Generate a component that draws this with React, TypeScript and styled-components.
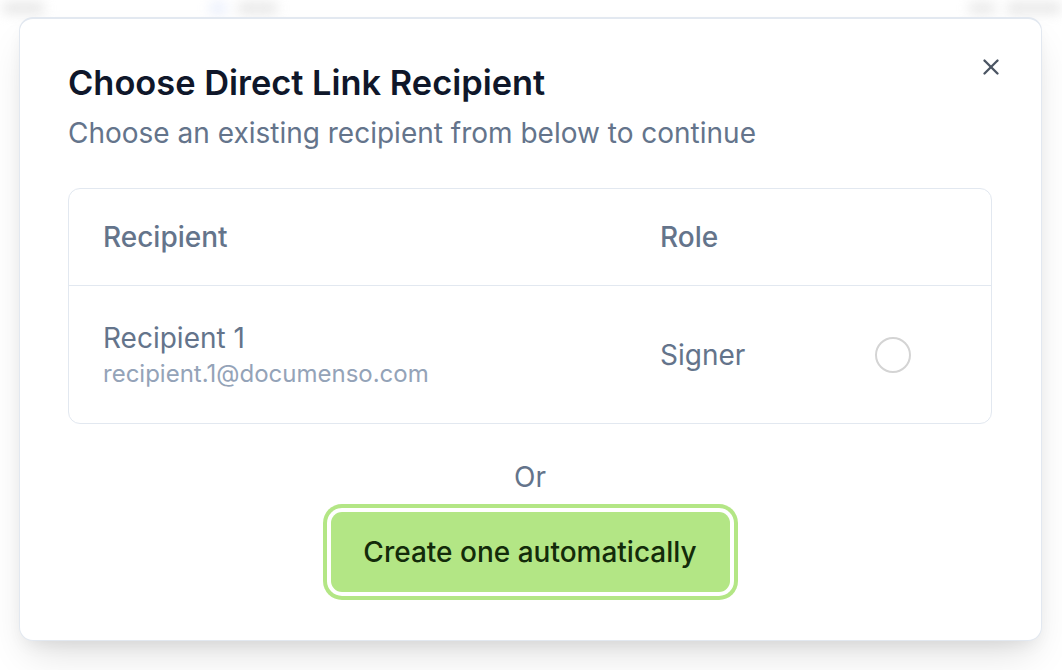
import React from "react";
import styled, { createGlobalStyle } from "styled-components";

const Global = createGlobalStyle`
  html, body { margin: 0; padding: 0; background: #ffffff; }
  body { font-family: Inter, "Noto Sans", sans-serif; -webkit-font-smoothing: antialiased; }
  * { box-sizing: border-box; }
`;

const Page = styled.div`
  position: relative;
  width: 1062px;
  height: 670px;
  overflow: hidden;
  background: #ffffff;
`;

const BackdropBar = styled.div`
  display: flex;
  align-items: center;
  height: 16px;
  filter: blur(6px);
  opacity: 0.6;
`;

const Blob = styled.div<{ $w: number; $ml: number; $c: string }>`
  width: ${(p) => p.$w}px;
  margin-left: ${(p) => p.$ml}px;
  height: 12px;
  border-radius: 6px;
  background: ${(p) => p.$c};
`;

const Dialog = styled.div`
  position: absolute;
  left: 19px;
  top: 17px;
  width: 1023px;
  height: 624px;
  background: #ffffff;
  border: 1px solid #e2e8f0;
  border-top-width: 2px;
  border-radius: 14px;
  box-shadow: 0 20px 40px -10px rgba(0, 0, 0, 0.14), 0 8px 18px -6px rgba(0, 0, 0, 0.08);
  padding: 43px 49px 0 48px;
  display: flex;
  flex-direction: column;
`;

const CloseButton = styled.button`
  position: absolute;
  top: 33px;
  right: 35px;
  width: 30px;
  height: 30px;
  border: none;
  background: transparent;
  padding: 0;
  display: flex;
  align-items: center;
  justify-content: center;
  color: #4b5563;
  cursor: pointer;
`;

const Title = styled.h2`
  margin: 0;
  font-size: 34.4px;
  line-height: 42px;
  font-weight: 600;
  letter-spacing: 0;
  color: #0f172a;
`;

const Subtitle = styled.p`
  margin: 10px 0 0;
  font-size: 28px;
  line-height: 38px;
  color: #64748b;
`;

const Table = styled.div`
  margin-top: 36px;
  border: 1.5px solid #e2e8f0;
  border-radius: 12px;
  overflow: hidden;
`;

const Row = styled.div<{ $h: number; $divider?: boolean }>`
  display: grid;
  grid-template-columns: 557px 215px 1fr;
  align-items: center;
  height: ${(p) => p.$h}px;
  padding-left: 34px;
  border-bottom: ${(p) => (p.$divider ? "1.5px solid #e2e8f0" : "none")};
`;

const HeadCell = styled.div`
  font-size: 28px;
  font-weight: 500;
  color: #64748b;
`;

const NameBlock = styled.div`
  display: flex;
  flex-direction: column;
  margin-top: 2px;
`;

const Name = styled.div`
  font-size: 28px;
  line-height: 36px;
  color: #64748b;
`;

const Email = styled.div`
  font-size: 24px;
  line-height: 36px;
  color: #94a3b8;
`;

const RoleText = styled.div`
  font-size: 28px;
  color: #64748b;
`;

const Radio = styled.span`
  display: block;
  width: 36px;
  height: 36px;
  border-radius: 50%;
  border: 2.5px solid #d4d4d4;
`;

const Or = styled.div`
  margin-top: 34px;
  text-align: center;
  font-size: 28px;
  line-height: 38px;
  color: #64748b;
`;

const ButtonWrap = styled.div`
  display: flex;
  justify-content: center;
  margin-top: 16px;
`;

const PrimaryButton = styled.button`
  width: 399px;
  height: 80px;
  border: none;
  border-radius: 11px;
  background: #b3e685;
  color: #132b0a;
  font-family: Inter, "Noto Sans", sans-serif;
  font-size: 28px;
  font-weight: 500;
  box-shadow: 0 0 0 4px #ffffff, 0 0 0 8px #b3e685;
  cursor: pointer;
`;

export default function App() {
  return (
    <Page>
      <Global />
      <BackdropBar>
        <Blob $w={46} $ml={2} $c="#d8d8d8" />
        <Blob $w={20} $ml={164} $c="#dbe4fb" />
        <Blob $w={44} $ml={10} $c="#d9d9d9" />
        <Blob $w={30} $ml={690} $c="#dcdcdc" />
        <Blob $w={60} $ml={10} $c="#d9d9d9" />
      </BackdropBar>
      <Dialog role="dialog">
        <CloseButton aria-label="Close">
          <svg width="26" height="26" viewBox="0 0 24 24" fill="none" stroke="currentColor" strokeWidth="2.2" strokeLinecap="round" strokeLinejoin="round">
            <path d="M18 6 6 18" />
            <path d="m6 6 12 12" />
          </svg>
        </CloseButton>
        <Title>Choose Direct Link Recipient</Title>
        <Subtitle>Choose an existing recipient from below to continue</Subtitle>
        <Table>
          <Row $h={97} $divider>
            <HeadCell>Recipient</HeadCell>
            <HeadCell>Role</HeadCell>
            <div />
          </Row>
          <Row $h={137}>
            <NameBlock>
              <Name>Recipient 1</Name>
              <Email>recipient.1@documenso.com</Email>
            </NameBlock>
            <RoleText>Signer</RoleText>
            <Radio />
          </Row>
        </Table>
        <Or>Or</Or>
        <ButtonWrap>
          <PrimaryButton>Create one automatically</PrimaryButton>
        </ButtonWrap>
      </Dialog>
    </Page>
  );
}
